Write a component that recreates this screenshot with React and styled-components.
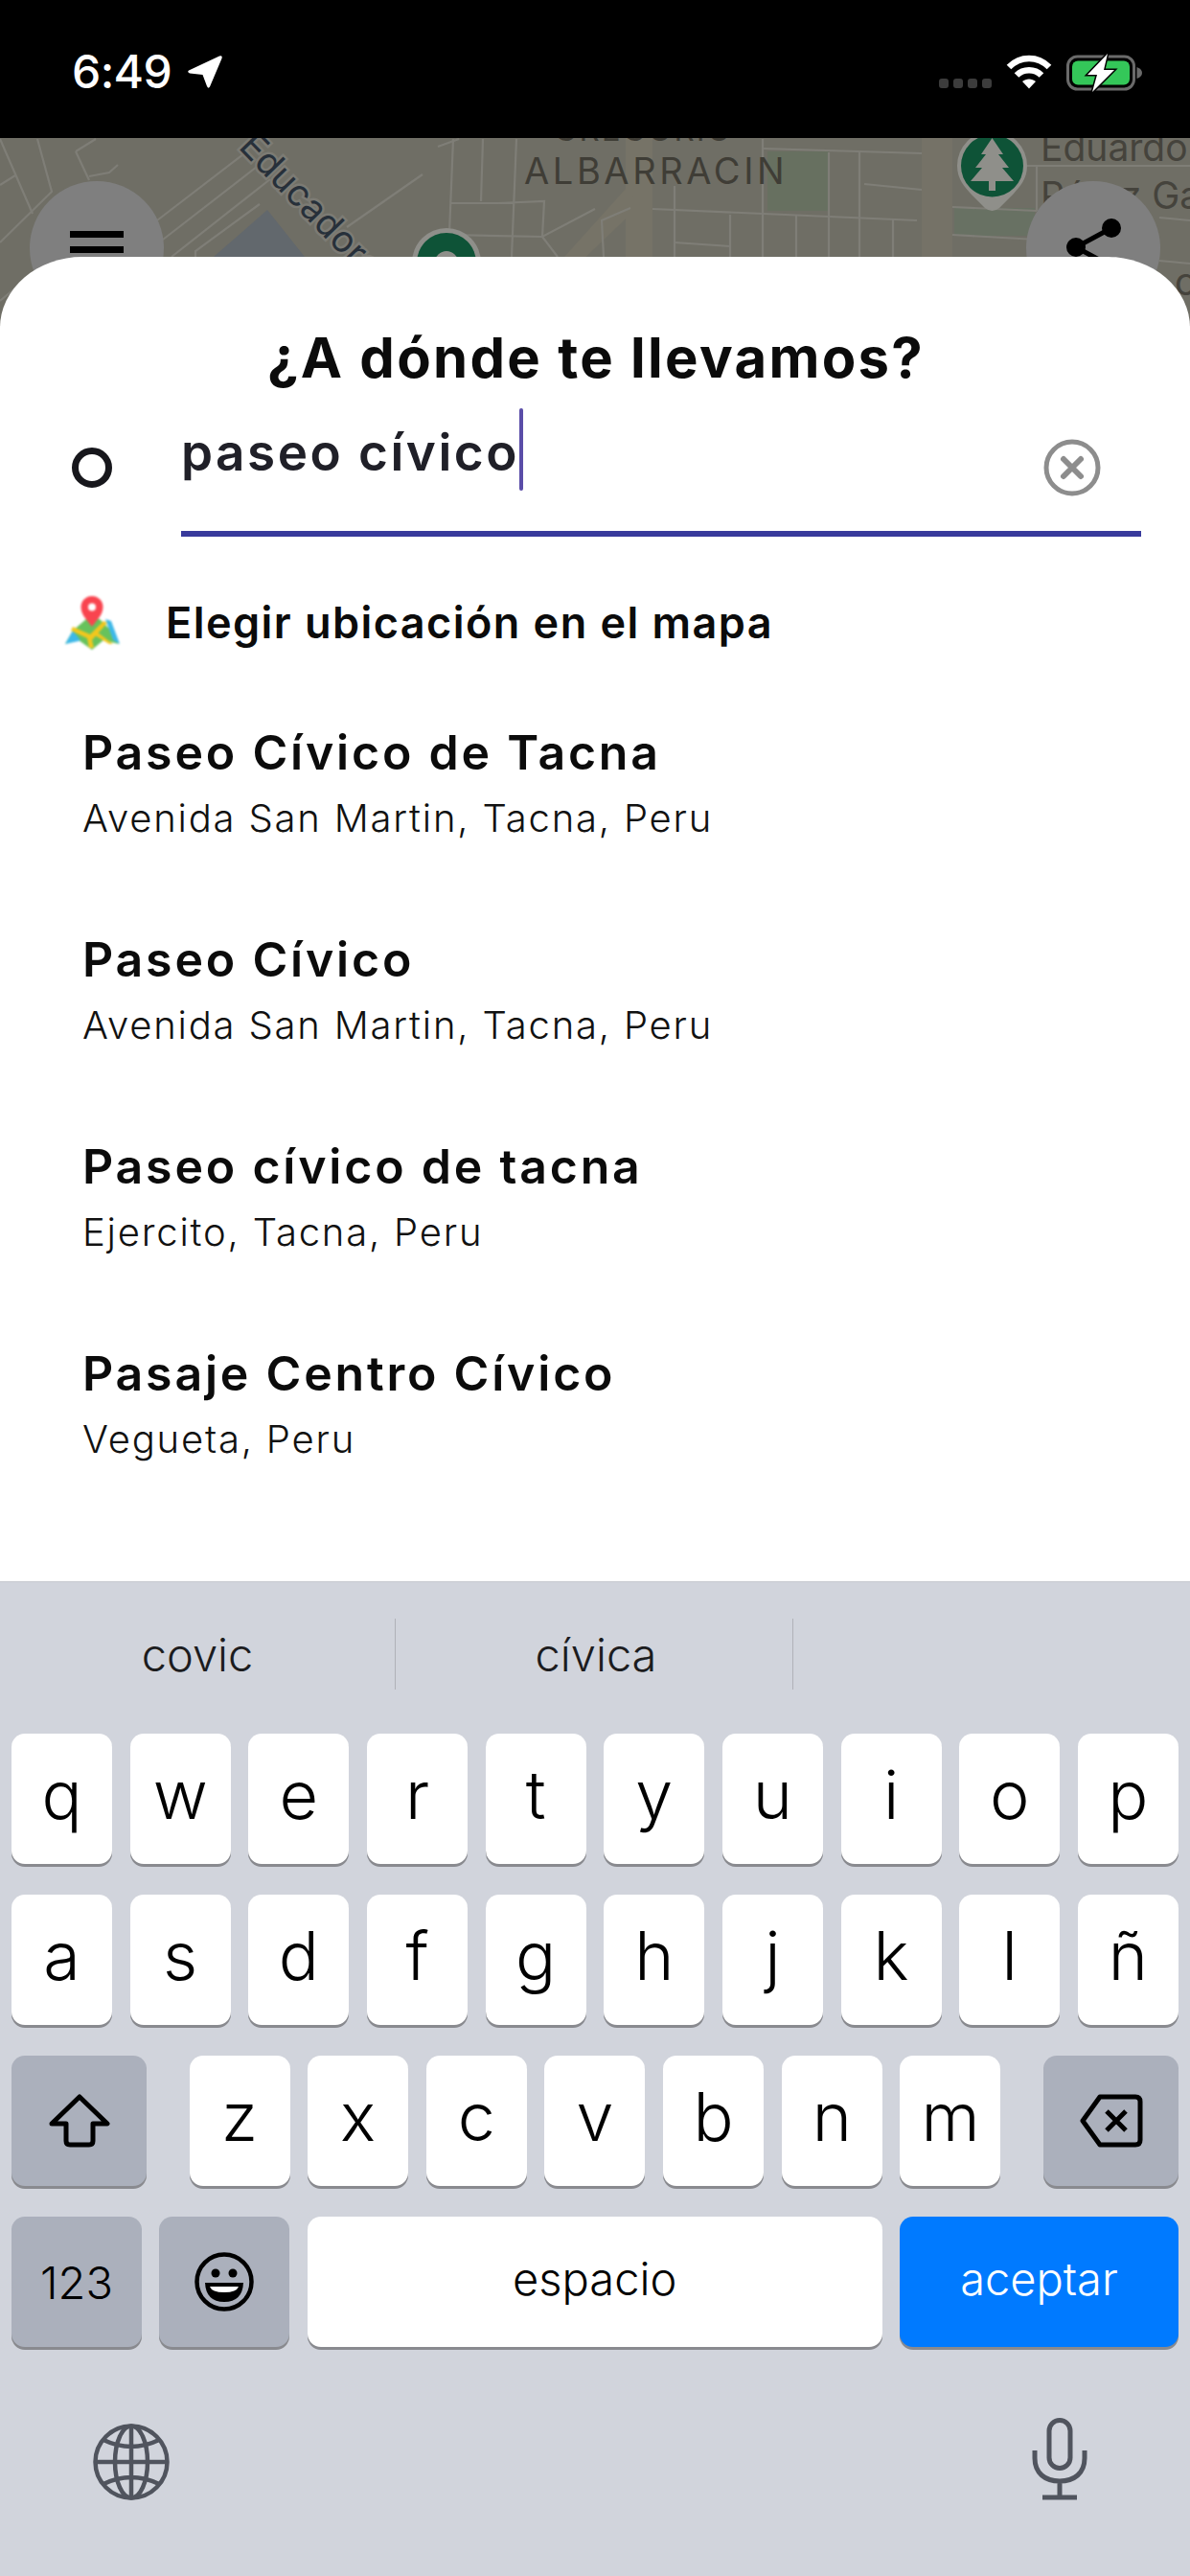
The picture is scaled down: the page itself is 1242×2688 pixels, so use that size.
import React from 'react';
import styled, { createGlobalStyle } from 'styled-components';

const Global = createGlobalStyle`
  html, body { margin: 0; padding: 0; background: #d1d4dc; }
  * { box-sizing: border-box; }
  body { font-family: Inter, "Noto Sans", sans-serif; }
`;

const Page = styled.div`
  width: 1242px; height: 2688px; display: flex; flex-direction: column; overflow: hidden;
`;

const StatusBar = styled.header`
  height: 144px; background: #000; flex: none; display: flex; align-items: flex-start;
  justify-content: space-between; padding: 50px 47px 0 75px; color: #fff;
`;
const StatusLeft = styled.div`display: flex; align-items: center; gap: 16px;`;
const Time = styled.span`font-size: 48px; line-height: 50px; font-weight: 500; letter-spacing: -0.6px;`;
const StatusRight = styled.div`display: flex; align-items: flex-start; padding-top: 6px;`;
const SignalDots = styled.div`display: flex; gap: 5px; margin: 26px 15px 0 0;`;
const SignalDot = styled.i`display: block; width: 10px; height: 10px; border-radius: 3px; background: #3c3c3c;`;

const MapArea = styled.section`
  position: relative; height: 196px; flex: none; margin-bottom: -72px; background: #6f6e65; overflow: hidden;
`;
const MapSvg = styled.svg`display: block; width: 1242px; height: 196px;`;
const MapButton = styled.button`
  position: absolute; top: 45px; ${p => (p.$right ? 'right: 31px;' : 'left: 31px;')}
  width: 140px; height: 140px; border: 0; padding: 0; border-radius: 50%; background: #7f7f7f;
`;
const MenuBars = styled.span`
  position: absolute; left: 42px; top: 52px; width: 56px; height: 23px;
  border-top: 7px solid #000; border-bottom: 7px solid #000;
`;
const ShareIcon = styled.svg`position: absolute; left: 30px; top: 30px;`;

const Sheet = styled.main`
  position: relative; z-index: 1; height: 1382px; flex: none; background: #fff;
  border-radius: 86px 86px 0 0 / 74px 74px 0 0; padding-top: 71px;
`;
const Title = styled.h1`
  margin: 0 0 0 2px; text-align: center; font-size: 58px; line-height: 68px; font-weight: 700; color: #0b0b0b; letter-spacing: 2.3px;
`;
const SearchRow = styled.div`display: flex; align-items: flex-start; padding: 15px 51px 0 75px;`;
const Ring = styled.span`
  width: 42px; height: 42px; border: 7px solid #17171c; border-radius: 50%; margin: 45px 72px 0 0; flex: none;
`;
const Field = styled.div`
  flex: 1; height: 138px; border-bottom: 6px solid #383a9c; display: flex; align-items: flex-start; justify-content: space-between; padding: 4px 42px 0 0;
`;
const Query = styled.div`display: flex; align-items: flex-start; font-size: 53px; line-height: 86px; font-weight: 600; color: #202028; letter-spacing: 2.5px;`;
const QueryText = styled.span`position: relative; top: 3px;`;
const Caret = styled.i`display: block; width: 4px; height: 86px; border-radius: 2px; background: #5a4da8;`;
const ClearIcon = styled.svg`margin-top: 32px; display: block;`;

const ChooseRow = styled.div`display: flex; align-items: center; height: 60px; margin-top: 60px; padding-left: 68px;`;
const ChooseIcon = styled.svg`display: block; flex: none; margin-right: 48px; filter: blur(1px);`;
const ChooseText = styled.span`font-size: 45px; line-height: 60px; font-weight: 600; color: #0b0b0b; letter-spacing: 1.45px;`;

const Places = styled.ul`list-style: none; margin: 40px 0 0; padding: 0 0 0 86px;`;
const Place = styled.li`height: 216px; padding-top: 35px;`;
const PlaceName = styled.div`font-size: 50px; line-height: 60px; font-weight: 600; color: #0b0b0b; letter-spacing: 2.8px;`;
const PlaceSub = styled.div`margin-top: 15px; font-size: 40px; line-height: 48px; font-weight: 300; color: #111; letter-spacing: 1.8px;`;

const Keyboard = styled.section`
  flex: 1; background: #d1d4dc; border-top: 1px solid #c6c8cf; padding: 0 12px;
  display: flex; flex-direction: column;
`;
const Suggestions = styled.div`display: flex; height: 158px; margin: 0 -12px; padding-top: 38px; align-items: flex-start;`;
const Suggestion = styled.div`
  width: ${p => p.$w}px; height: 74px; display: flex; align-items: center; justify-content: center;
  font-size: 47px; font-weight: 300; color: #1c1c1e; padding-left: ${p => p.$pl || 0}px;
  ${p => (p.$divider ? 'border-right: 1px solid #b0b2b8;' : '')}
`;
const KeyRow = styled.div`display: flex; justify-content: space-between; height: 136px; margin-bottom: 32px;`;
const KeyGroup = styled.div`display: flex; justify-content: space-between; width: 847px;`;
const Key = styled.div`
  width: ${p => p.$w || 105}px; height: 136px; flex: none; border-radius: 14px; display: flex; align-items: center; justify-content: center;
  background: ${p => p.$bg || '#fff'}; color: ${p => p.$fg || '#000'}; box-shadow: 0 3px 0 #898a8f;
  font-size: ${p => p.$fs || 70}px; font-weight: 300; padding-bottom: ${p => p.$pb ?? 10}px;
`;
const BottomBar = styled.div`display: flex; justify-content: space-between; align-items: flex-start; padding: 42px 95px 0 85px;`;
const GlobeIcon = styled.svg`display: block; margin-top: 5px;`;
const MicIcon = styled.svg`display: block;`;

const rows = ['qwertyuiop', 'asdfghjklñ'];
const places = [
  ['Paseo Cívico de Tacna', 'Avenida San Martin, Tacna, Peru'],
  ['Paseo Cívico', 'Avenida San Martin, Tacna, Peru'],
  ['Paseo cívico de tacna', 'Ejercito, Tacna, Peru'],
  ['Pasaje Centro Cívico', 'Vegueta, Peru'],
];

const road = '#7f7e77';
const roads = [
  'M0 1L34 79', 'M39 1L54 56L0 109', 'M0 49L16 39', 'M79 14L100 1', 'M79 14L93 44', 'M93 40L114 36L123 28',
  'M164 86L259 13', 'M170 106L268 30', 'M179 124L282 43', 'M204 124V118L271 69', 'M362 93L441 38', 'M457 9L479 1',
  'M473 1L468 124', 'M504 1L502 66', 'M539 1L534 124', 'M470 68H536', 'M470 101L566 103L621 74', 'M566 103L582 124',
  'M520 68L568 66L566 103', 'M630 124L628 86L658 73', 'M796 11L962 16', 'M902 48L962 54', 'M681 74L957 86',
  'M704 109L762 113', 'M704 50V124', 'M762 80V124', 'M796 1V124', 'M831 80V124', 'M865 15V124', 'M897 15V124', 'M932 85V124',
  'M1068 29H1242', 'M1082 29V76', 'M994 101L1082 106', 'M994 72L1082 76', 'M1210 83L1242 86', 'M1210 128L1242 131',
  'M0 170L60 120', 'M20 196L90 130',
];

function MapDrawing() {
  return (
    <MapSvg viewBox="0 0 1242 196">
      <rect width="1242" height="196" fill="#6f6e65" />
      <path d="M962 0H994V196H962Z" fill="#757267" />
      <path d="M653 0H681V196H653Z" fill="#767367" />
      <path d="M653 53L589 124L600 135L668 70Z" fill="#767367" />
      <path d="M801 14H865V76H801Z" fill="#677060" />
      <path d="M996 73H1080V102H996Z" fill="#687163" />
      <path d="M279 75L223 124L200 196H340L318 124Z" fill="#62686d" />
      <g fill="none" stroke={road} strokeWidth="2.200">
        {roads.map(d => <path key={d} d={d} />)}
      </g>
      <g fontFamily="Inter, sans-serif">
        <text x="578" y="3" fontSize="33" letterSpacing="2" fill="#3f3d36">GREGORIO</text>
        <text x="547" y="48" fontSize="38" letterSpacing="3.6" fill="#3f3d36">ALBARRACIN</text>
        <text x="1086" y="24" fontSize="39" fill="#45433c">Eduardo</text>
        <text x="1086" y="74" fontSize="39" fill="#45433c">Pérez Ga</text>
        <text x="1226" y="164" fontSize="39" fill="#45433c">co</text>
        <text transform="translate(248 10) rotate(46)" fontSize="38" fill="#27303a" stroke="#7c7b74" strokeWidth="5" paintOrder="stroke">Educadores</text>
      </g>
      <path d="M999 29a36.5 36.5 0 0 1 73 0c0 14-8 22-14 29L1043 73q-7.500 6-15 0L1013 58c-6-7-14-15-14-29Z" fill="#8f8f8a" />
      <circle cx="1035.500" cy="29" r="32.500" fill="#0e5337" />
      <path d="M1035.500 0L1047 17H1042L1053 31H1046L1058 45H1039V55H1032V45H1013L1025 31H1018L1029 17H1024Z" fill="#8f8f8a" />
      <circle cx="466" cy="130" r="36" fill="#8f8f8a" />
      <circle cx="466" cy="130" r="31" fill="#0e5337" />
      <circle cx="466" cy="130" r="12" fill="#8f8f8a" />
    </MapSvg>
  );
}

function MapPinIcon() {
  return (
    <ChooseIcon width="57" height="56" viewBox="0 0 57 56">
      <path d="M0 50L8 36L22 24L36 24L48 36L56 50L40 46L28 56L14 46Z" fill="#67c25c" />
      <path d="M0 50L8 36L16 46L14 47Z M42 24L48 26L57 50L50 46Z" fill="#3db8e8" />
      <path d="M8 32L26 40L40 26L44 28L28 46L30 54L25 54L23 44L6 36Z M34 38L50 50L46 50L31 41Z" fill="#f2c71d" />
      <path d="M28 0a11.500 11.500 0 0 1 11.500 11.500C39.500 20 32 26 28 32C24 26 16.500 20 16.500 11.500A11.500 11.500 0 0 1 28 0Z" fill="#f9444f" />
      <circle cx="28" cy="11.500" r="4" fill="#fff" />
    </ChooseIcon>
  );
}

export default function App() {
  return (
    <Page>
      <Global />
      <StatusBar>
        <StatusLeft>
          <Time>6:49</Time>
          <svg width="38" height="36" viewBox="0 0 38 36"><path d="M2 16.500L34 1.500Q37.500 0.500 36.500 4L24 33.500Q22.500 36 21 33L16.500 21L3 19.500Q0 18 2 16.500Z" fill="#fff" /></svg>
        </StatusLeft>
        <StatusRight>
          <SignalDots>{[0, 1, 2, 3].map(i => <SignalDot key={i} />)}</SignalDots>
          <svg width="48" height="38" viewBox="0 0 48 38" style={{ marginRight: 15 }}>
            <g fill="none" stroke="#fff" strokeWidth="6.500">
              <path d="M3 14C15 2 33 2 45 14" />
              <path d="M11 22.500C18 15.500 30 15.500 37 22.500" />
            </g>
            <path d="M17 29C21 25.500 27 25.500 31 29L24 36.500Z" fill="#fff" />
          </svg>
          <svg width="82" height="40" viewBox="0 0 82 40">
            <rect x="1.500" y="3" width="69" height="34" rx="10" fill="none" stroke="#6a6a6a" strokeWidth="3" />
            <rect x="6" y="7.500" width="60" height="25" rx="6" fill="#34c759" />
            <path d="M73.500 14Q79 16 79 20Q79 24 73.500 26Z" fill="#6a6a6a" />
            <path d="M43 0L22 22H32L27 40L50 17H39Z" fill="#fff" stroke="#000" strokeWidth="3" paintOrder="stroke" />
          </svg>
        </StatusRight>
      </StatusBar>

      <MapArea>
        <MapDrawing />
        <MapButton aria-label="menú"><MenuBars /></MapButton>
        <MapButton $right aria-label="compartir">
          <ShareIcon width="80" height="80" viewBox="0 0 80 80">
            <path d="M59 19L22 39L59 59" fill="none" stroke="#000" strokeWidth="5" />
            <circle cx="59" cy="19" r="10" /><circle cx="22" cy="39" r="10" /><circle cx="59" cy="59" r="10" />
          </ShareIcon>
        </MapButton>
      </MapArea>

      <Sheet>
        <Title>¿A dónde te llevamos?</Title>
        <SearchRow>
          <Ring />
          <Field>
            <Query><QueryText>paseo cívico</QueryText><Caret /></Query>
            <ClearIcon width="60" height="60" viewBox="0 0 60 60">
              <circle cx="30" cy="30" r="27" fill="none" stroke="#8d8d8d" strokeWidth="5" />
              <path d="M21 21L39 39M39 21L21 39" stroke="#8d8d8d" strokeWidth="6" strokeLinecap="round" />
            </ClearIcon>
          </Field>
        </SearchRow>
        <ChooseRow>
          <MapPinIcon />
          <ChooseText>Elegir ubicación en el mapa</ChooseText>
        </ChooseRow>
        <Places>
          {places.map(([n, s]) => (
            <Place key={n}>
              <PlaceName>{n}</PlaceName>
              <PlaceSub>{s}</PlaceSub>
            </Place>
          ))}
        </Places>
      </Sheet>

      <Keyboard>
        <Suggestions>
          <Suggestion $w={413} $divider>covic</Suggestion>
          <Suggestion $w={415} $pl={4} $divider>cívica</Suggestion>
        </Suggestions>
        {rows.map(r => (
          <KeyRow key={r}>{[...r].map(c => <Key key={c}>{c}</Key>)}</KeyRow>
        ))}
        <KeyRow>
          <Key $w={141} $bg="#abb0bc" $pb={0}>
            <svg width="64" height="56" viewBox="0 0 64 56"><path d="M32 3L61 31H46V49Q46 53 42 53H22Q18 53 18 49V31H3Z" fill="none" stroke="#000" strokeWidth="5" strokeLinejoin="round" /></svg>
          </Key>
          <KeyGroup>{[...'zxcvbnm'].map(c => <Key key={c}>{c}</Key>)}</KeyGroup>
          <Key $w={141} $bg="#abb0bc" $pb={0}>
            <svg width="66" height="56" viewBox="0 0 66 56">
              <path d="M21 3H58Q63 3 63 8V48Q63 53 58 53H21L3 28Z" fill="none" stroke="#000" strokeWidth="5" strokeLinejoin="round" />
              <path d="M28 18L48 38M48 18L28 38" stroke="#000" strokeWidth="5" />
            </svg>
          </Key>
        </KeyRow>
        <KeyRow>
          <Key $w={136} $bg="#abb0bc" $fs={47} $pb={0}>123</Key>
          <Key $w={136} $bg="#abb0bc" $pb={0}>
            <svg width="62" height="62" viewBox="0 0 62 62">
              <circle cx="31" cy="31" r="28.500" fill="none" stroke="#000" strokeWidth="4.500" />
              <circle cx="22" cy="22" r="4.500" /><circle cx="40" cy="22" r="4.500" />
              <path d="M11 32H51Q50 52 31 52Q12 52 11 32Z" fill="#000" />
              <path d="M16 36H46Q44 42 31 42Q18 42 16 36Z" fill="#fff" />
            </svg>
          </Key>
          <Key $w={600} $fs={47} $pb={8}>espacio</Key>
          <Key $w={291} $bg="#007aff" $fg="#fff" $fs={47} $pb={8}>aceptar</Key>
        </KeyRow>
        <BottomBar>
          <GlobeIcon width="80" height="82" viewBox="0 0 80 82">
            <g fill="none" stroke="#50545e" strokeWidth="4.500">
              <circle cx="40" cy="41" r="37.500" />
              <ellipse cx="40" cy="41" rx="17" ry="37.500" />
              <path d="M40 3V79M3 41H77M11 18Q40 32 69 18M11 64Q40 50 69 64" />
            </g>
          </GlobeIcon>
          <MicIcon width="58" height="86" viewBox="0 0 58 86">
            <g fill="none" stroke="#50545e" strokeWidth="5">
              <rect x="18" y="2.500" width="22" height="50" rx="11" />
              <path d="M3 34V42C3 58 14 66 29 66C44 66 55 58 55 42V34M29 66V82M11 83H47" />
            </g>
          </MicIcon>
        </BottomBar>
      </Keyboard>
    </Page>
  );
}
